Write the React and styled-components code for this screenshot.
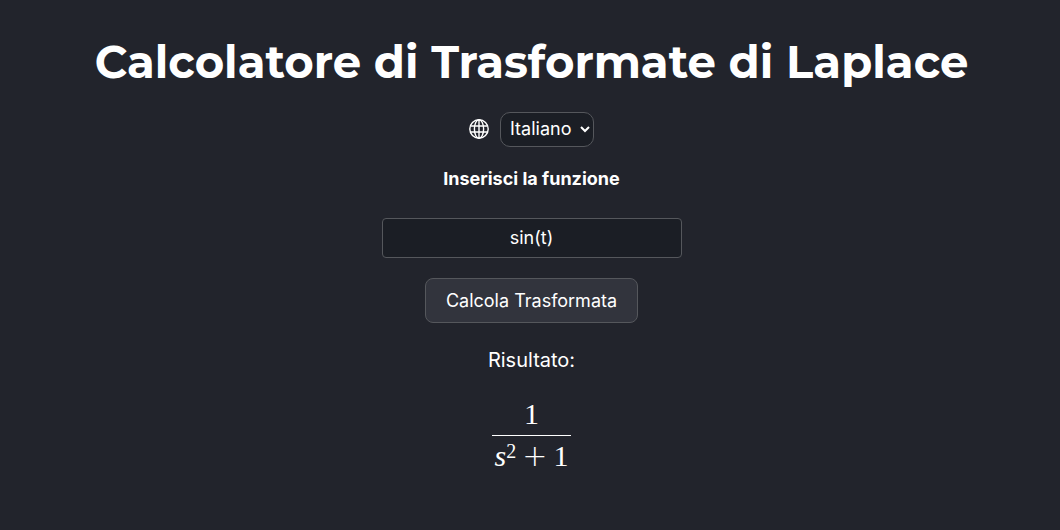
import { useState } from "react";
import styled, { createGlobalStyle } from "styled-components";

const GlobalStyle = createGlobalStyle`
  * {
    box-sizing: border-box;
  }
  body {
    margin: 0;
    background: #22242c;
    color: #fff;
    font-family: Inter, "Liberation Sans", sans-serif;
  }
`;

const Container = styled.main`
  display: flex;
  flex-direction: column;
  align-items: center;
  padding: 32px 20px 32px 23px;
  text-align: center;
`;

const Title = styled.h1`
  margin: 0 0 20px;
  font-family: Montserrat, Inter, sans-serif;
  font-size: 45px;
  line-height: 60px;
  font-weight: 700;
`;

const LanguageBar = styled.div`
  display: flex;
  align-items: center;
  gap: 11px;
  margin-bottom: 20px;
`;

const GlobeIcon = styled.svg`
  width: 20px;
  height: 20px;
  margin-bottom: 1px;
  fill: none;
  stroke: currentColor;
  stroke-width: 1.4;
`;

const Select = styled.select`
  height: 35px;
  padding: 0 5px 2px;
  border: 1px solid #55575c;
  border-radius: 10px;
  background: #1b1e25;
  color: inherit;
  font-family: inherit;
  font-size: 18px;
`;

const Form = styled.form`
  display: flex;
  flex-direction: column;
  align-items: center;
`;

const Label = styled.label`
  margin-bottom: 27px;
  font-size: 18px;
  line-height: 24px;
  font-weight: 700;
`;

const Input = styled.input`
  width: 300px;
  max-width: 100%;
  height: 40px;
  margin-bottom: 20px;
  padding: 0 2px 2px;
  border: 1px solid #55575c;
  border-radius: 4px;
  background: #1b1e25;
  color: inherit;
  font-family: inherit;
  font-size: 18px;
  text-align: center;
`;

const Button = styled.button`
  height: 45px;
  padding: 0 20px;
  border: 1px solid #55575c;
  border-radius: 8px;
  background: #32343d;
  color: inherit;
  font-family: inherit;
  font-size: 18px;
`;

const ResultLabel = styled.p`
  margin: 25px 0 22px;
  font-size: 20px;
  line-height: 24px;
`;

const Fraction = styled.div`
  display: flex;
  flex-direction: column;
  font-family: "Liberation Serif", serif;
  font-size: 30px;
  line-height: 40px;
`;

const Numerator = styled.span`
  padding-bottom: 1px;
  border-bottom: 1px solid #fff;
`;

const Denominator = styled.span`
  display: flex;
  align-items: baseline;
  padding: 0 3px;
`;

const Exponent = styled.sup`
  font-size: 20px;
  line-height: 0;
  vertical-align: 8px;
`;

const Operator = styled.span`
  margin: 0 6px;
  font-family: "DejaVu Sans", sans-serif;
  font-weight: 200;
  line-height: 1;
`;

export default function App() {
  const [language, setLanguage] = useState("it");
  const [expression, setExpression] = useState("sin(t)");

  const handleSubmit = e => {
    e.preventDefault();
  };

  return (
    <Container>
      <GlobalStyle />
      <Title>Calcolatore di Trasformate di Laplace</Title>
      <LanguageBar>
        <GlobeIcon viewBox="0 0 20 20" aria-hidden="true">
          <circle cx="10" cy="10" r="9.2" />
          <ellipse cx="10" cy="10" rx="4.6" ry="9.2" />
          <path d="M10 .8v18.4M1.8 7h16.4M1.8 13h16.4" />
        </GlobeIcon>
        <Select
          aria-label="Lingua"
          value={language}
          onChange={e => setLanguage(e.target.value)}
        >
          <option value="it">Italiano</option>
          <option value="en">English</option>
        </Select>
      </LanguageBar>
      <Form onSubmit={handleSubmit}>
        <Label htmlFor="expression">Inserisci la funzione</Label>
        <Input
          id="expression"
          value={expression}
          onChange={e => setExpression(e.target.value)}
        />
        <Button type="submit">Calcola Trasformata</Button>
      </Form>
      <ResultLabel>Risultato:</ResultLabel>
      <Fraction>
        <Numerator>1</Numerator>
        <Denominator>
          <span>
            <i>s</i>
            <Exponent>2</Exponent>
          </span>
          <Operator>+</Operator>
          <span>1</span>
        </Denominator>
      </Fraction>
    </Container>
  );
}
